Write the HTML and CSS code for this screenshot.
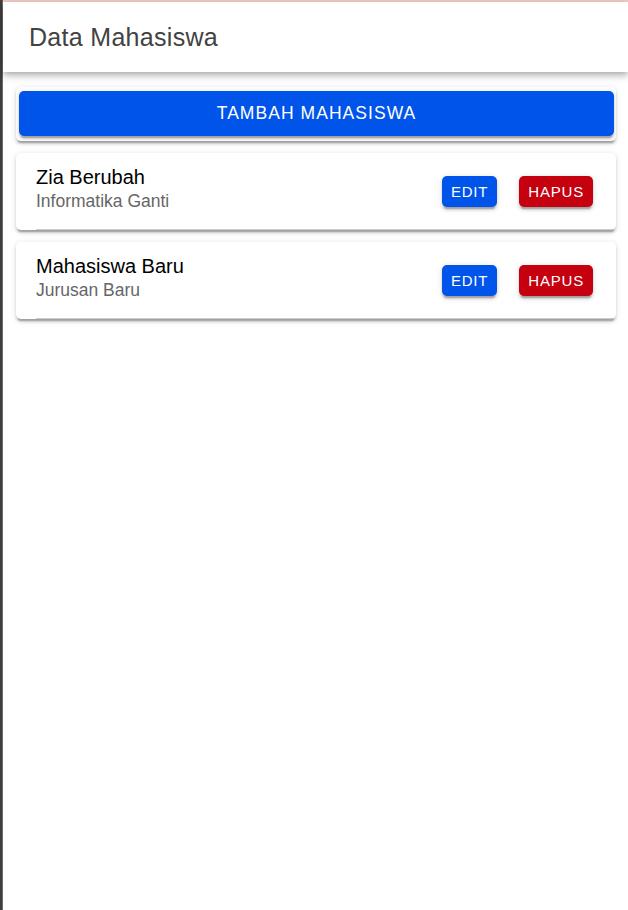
FILE: index.html
```html
<!DOCTYPE html>
<html lang="id">
<head>
<meta charset="utf-8">
<title>Data Mahasiswa</title>
<link rel="stylesheet" href="styles.css">
</head>
<body>
<div class="frame">
  <div class="edge"></div>
  <div class="app">
    <header class="toolbar">
      <h1 class="title">Data Mahasiswa</h1>
    </header>
    <main class="content">
      <div class="card add-card">
        <button class="btn btn-block">TAMBAH MAHASISWA</button>
      </div>
      <div class="card">
        <div class="item">
          <div class="item-inner">
            <div class="label">
              <h2>Zia Berubah</h2>
              <p>Informatika Ganti</p>
            </div>
            <div class="actions">
              <button class="btn btn-small primary">EDIT</button>
              <button class="btn btn-small danger">HAPUS</button>
            </div>
          </div>
        </div>
      </div>
      <div class="card">
        <div class="item">
          <div class="item-inner">
            <div class="label">
              <h2>Mahasiswa Baru</h2>
              <p>Jurusan Baru</p>
            </div>
            <div class="actions">
              <button class="btn btn-small primary">EDIT</button>
              <button class="btn btn-small danger">HAPUS</button>
            </div>
          </div>
        </div>
      </div>
    </main>
  </div>
</div>
</body>
</html>
```
FILE: styles.css
```css
html, body {
  margin: 0;
  padding: 0;
  height: 100%;
  background: #fff;
}

body {
  font-family: "Liberation Sans", Arial, sans-serif;
}

.frame {
  display: flex;
  min-height: 100vh;
}

.edge {
  flex: none;
  width: 3px;
  background: linear-gradient(to right, #3f3f3f 0, #3f3f3f 2px, #6a6a6a 2px);
}

.app {
  flex: 1;
  min-width: 0;
  border-top: 2px solid #efcdc4;
}

.toolbar {
  position: relative;
  z-index: 1;
  height: 70px;
  display: flex;
  align-items: center;
  padding-left: 26px;
  background: #fff;
  box-shadow: 0 2.5px 5px -1.25px rgba(0, 0, 0, 0.2),
              0 5px 6px 0 rgba(0, 0, 0, 0.14),
              0 1.25px 12.5px 0 rgba(0, 0, 0, 0.12);
}

.title {
  margin: 1px 0 0;
  font-size: 25px;
  font-weight: 400;
  color: #424242;
  letter-spacing: 0.3px;
}

.content {
  display: flex;
  flex-direction: column;
  gap: 12px;
  padding: 15px 12px 0 13px;
}

.card {
  background: #fff;
  border-radius: 5px;
  overflow: hidden;
  box-shadow: 0 3.75px 1.25px -2.5px rgba(0, 0, 0, 0.2),
              0 2.5px 2.5px 0 rgba(0, 0, 0, 0.14),
              0 1.25px 6.25px 0 rgba(0, 0, 0, 0.12);
}

.add-card {
  padding: 4px 2px 5px 3px;
}

.btn {
  border: 0;
  margin: 0;
  font-family: inherit;
  color: #fff;
  cursor: pointer;
  box-shadow: 0 3.75px 1.25px -2.5px rgba(0, 0, 0, 0.2),
              0 2.5px 2.5px 0 rgba(0, 0, 0, 0.14),
              0 1.25px 6.25px 0 rgba(0, 0, 0, 0.12);
}

.btn-block {
  display: block;
  width: 100%;
  height: 45px;
  border-radius: 5px;
  background: #0054e9;
  font-size: 17.5px;
  letter-spacing: 1.05px;
}

.item {
  padding-left: 20px;
}

.item-inner {
  display: flex;
  align-items: center;
  height: 77px;
  box-sizing: border-box;
  padding-right: 23px;
  border-bottom: 1px solid rgba(0, 0, 0, 0.2);
}

.label {
  flex: 1;
  align-self: flex-start;
  padding-top: 13px;
  min-width: 0;
}

.label h2 {
  margin: 0;
  font-size: 20px;
  line-height: 23px;
  font-weight: 400;
  color: #000;
}

.label p {
  margin: 1.5px 0 0;
  font-size: 17.5px;
  line-height: 20px;
  color: #666;
}

.actions {
  display: flex;
  gap: 22px;
}

.btn-small {
  height: 31px;
  padding: 0 9px;
  border-radius: 5px;
  font-size: 15px;
  letter-spacing: 0.8px;
}

.primary {
  background: #0054e9;
}

.danger {
  background: #c5000f;
}
```
